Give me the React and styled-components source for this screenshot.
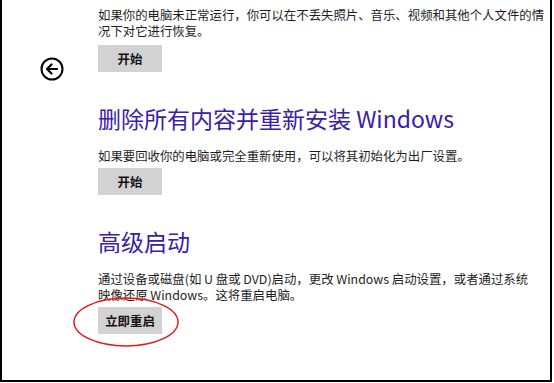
import React from "react";
import styled, { createGlobalStyle } from "styled-components";

const Global = createGlobalStyle`
  html, body { margin: 0; padding: 0; background: #fff; }
  body { width: 554px; height: 383px; overflow: hidden; }
`;

const Frame = styled.div`
  box-sizing: border-box;
  width: 552px;
  height: 382px;
  border-left: 2px solid #000;
  border-right: 2px solid #000;
  border-bottom: 2px solid #000;
  display: grid;
  grid-template-columns: 96px 1fr;
  font-family: "Noto Sans CJK SC", "Noto Sans", sans-serif;
  color: #1c1c1c;
`;

const Side = styled.div`
  padding-top: 57px;
  padding-left: 38px;
`;

const BackButton = styled.div`
  width: 24px;
  height: 24px;
  display: flex;
  align-items: center;
  justify-content: center;
`;

const Content = styled.div`
  padding-top: 7px;
  display: flex;
  flex-direction: column;
  align-items: flex-start;
`;

const Text = styled.p`
  margin: ${(p) => p.$mt || 0}px 0 0 0;
  font-size: 12.4px;
  line-height: 16px;
  white-space: nowrap;
  color: #1e1e1e;
`;

const Heading = styled.h2`
  margin: ${(p) => p.$mt || 0}px 0 0 0;
  font-size: 23px;
  line-height: 30px;
  font-weight: 400;
  color: #3a20a4;
  white-space: nowrap;
`;

const ButtonWrap = styled.div`
  position: relative;
  margin-top: ${(p) => p.$mt || 0}px;
`;

const Button = styled.div`
  width: 64px;
  height: 27px;
  background: #d2d2d2;
  display: flex;
  align-items: center;
  justify-content: center;
  font-size: 12.4px;
  font-weight: 700;
  color: #111;
`;

const Annotation = styled.svg`
  position: absolute;
  left: -25px;
  top: -10px;
  width: 106px;
  height: 50px;
  overflow: visible;
`;

export default function App() {
  return (
    <>
      <Global />
      <Frame>
        <Side>
          <BackButton>
            <svg width="24" height="24" viewBox="0 0 24 24">
              <circle cx="12" cy="12" r="10.5" fill="none" stroke="#000" strokeWidth="2" />
              <path d="M17 12H7.5M11.5 7.5L7 12l4.5 4.5" fill="none" stroke="#000" strokeWidth="2.2" strokeLinecap="round" strokeLinejoin="round" />
            </svg>
          </BackButton>
        </Side>
        <Content>
          <Text>
            如果你的电脑未正常运行，你可以在不丢失照片、音乐、视频和其他个人文件的情
            <br />
            况下对它进行恢复。
          </Text>
          <ButtonWrap $mt={6}>
            <Button>开始</Button>
          </ButtonWrap>
          <Heading $mt={31}>删除所有内容并重新安装 Windows</Heading>
          <Text $mt={15}>如果要回收你的电脑或完全重新使用，可以将其初始化为出厂设置。</Text>
          <ButtonWrap $mt={4}>
            <Button>开始</Button>
          </ButtonWrap>
          <Heading $mt={31}>高级启动</Heading>
          <Text $mt={15}>
            通过设备或磁盘(如 U 盘或 DVD)启动，更改 Windows 启动设置，或者通过系统
            <br />
            映像还原 Windows。这将重启电脑。
          </Text>
          <ButtonWrap $mt={4}>
            <Button>立即重启</Button>
            <Annotation viewBox="0 0 106 50">
              <ellipse cx="53" cy="25" rx="52" ry="24" fill="none" stroke="#e01818" strokeWidth="1.4" />
            </Annotation>
          </ButtonWrap>
        </Content>
      </Frame>
    </>
  );
}
